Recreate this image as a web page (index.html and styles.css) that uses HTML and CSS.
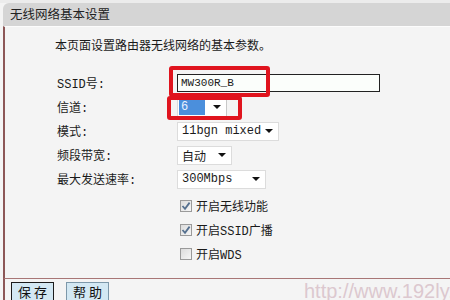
FILE: index.html
```html
<!DOCTYPE html>
<html>

<head>
    <meta charset="UTF-8">
    <title>无线网络基本设置</title>
    <link rel="stylesheet" href="styles.css">
</head>

<body>
    <div class="page">
        <div class="panel">
            <div class="panel-title">无线网络基本设置</div>
            <div class="panel-body">
                <p class="intro">本页面设置路由器无线网络的基本参数。</p>

                <div class="form">
                    <div class="row">
                        <span class="label">SSID号:</span>
                        <span class="field text-field">MW300R_B<span class="mark mark-ssid"></span></span>
                    </div>
                    <div class="row">
                        <span class="label">信道:</span>
                        <span class="field select select-channel">
                            <span class="value selected">6</span>
                            <span class="arrow"></span>
                            <span class="mark mark-channel"></span>
                        </span>
                    </div>
                    <div class="row">
                        <span class="label">模式:</span>
                        <span class="field select select-mode">
                            <span class="value">11bgn mixed</span>
                            <span class="arrow"></span>
                        </span>
                    </div>
                    <div class="row">
                        <span class="label">频段带宽:</span>
                        <span class="field select select-width">
                            <span class="value">自动</span>
                            <span class="arrow"></span>
                        </span>
                    </div>
                    <div class="row">
                        <span class="label">最大发送速率:</span>
                        <span class="field select select-rate">
                            <span class="value">300Mbps</span>
                            <span class="arrow"></span>
                        </span>
                    </div>
                </div>

                <div class="checks">
                    <div class="check-row">
                        <span class="checkbox checked">
                            <svg width="10" height="10" viewBox="0 0 10 10"><path d="M1.5 5 L4 7.8 L8.6 1.6" fill="none" stroke="#55708f" stroke-width="1.8"/></svg>
                        </span>
                        <span>开启无线功能</span>
                    </div>
                    <div class="check-row">
                        <span class="checkbox checked">
                            <svg width="10" height="10" viewBox="0 0 10 10"><path d="M1.5 5 L4 7.8 L8.6 1.6" fill="none" stroke="#55708f" stroke-width="1.8"/></svg>
                        </span>
                        <span>开启SSID广播</span>
                    </div>
                    <div class="check-row">
                        <span class="checkbox"></span>
                        <span>开启WDS</span>
                    </div>
                </div>
            </div>
        </div>

        <div class="footer">
            <button class="button button-active">保 存</button>
            <button class="button">帮 助</button>
        </div>

        <div class="watermark">http://www.192ly.com</div>
    </div>
</body>

</html>
```

FILE: styles.css
```css
body {
    margin: 0;
    padding: 0;
    background-color: #f4f4f4;
    font-family: "Liberation Mono", "Noto Sans CJK SC", monospace;
    font-size: 12px;
    color: #1a1a1a;
}

.page {
    position: relative;
    width: 450px;
    height: 300px;
    overflow: hidden;
    background: linear-gradient(#ececec, #ececec 3px, #f4f4f4 3px);
}

.panel {
    padding-top: 3px;
}

.panel-title {
    margin-left: 3px;
    height: 23px;
    line-height: 22px;
    padding-left: 7px;
    background-color: #d5d5d5;
    border-top-left-radius: 6px;
    font-family: "Noto Sans CJK SC", sans-serif;
    font-size: 12.5px;
    color: #222;
}

.panel-body {
    margin-left: 3px;
    height: 252px;
    border-left: 2px solid #8c5757;
    border-top: 1px solid #fcfcfc;
    padding: 9px 0 0 50px;
    box-sizing: border-box;
}

.intro {
    margin: 0;
    line-height: 18px;
    font-family: "Noto Sans CJK SC", sans-serif;
}

.form {
    margin: 17px 0 0 2px;
}

.row {
    display: flex;
    align-items: center;
    height: 24px;
}

.label {
    width: 120px;
    flex-shrink: 0;
}

.field {
    position: relative;
    display: flex;
    align-items: center;
    box-sizing: border-box;
    height: 19px;
    background-color: #fff;
}

.text-field {
    width: 203px;
    height: 18px;
    border: 1px solid #222;
    padding-left: 3px;
    font-size: 11px;
    background-color: #fbfefb;
}

.select {
    border: 1px solid #dcdcdc;
    padding-left: 4px;
    justify-content: space-between;
}

.select .arrow {
    width: 0;
    height: 0;
    margin-right: 5px;
    border-left: 4px solid transparent;
    border-right: 4px solid transparent;
    border-top: 4px solid #111;
}

.select-channel {
    width: 50px;
    padding-left: 1px;
    border-right-color: #c8c8c8;
}

.select-channel .arrow {
    margin-right: 5px;
}

.value.selected {
    display: block;
    width: 26px;
    height: 15px;
    line-height: 15px;
    padding-left: 2px;
    background-color: #4b8fdc;
    color: #e8f2ff;
    box-sizing: border-box;
}

.select-mode {
    width: 102px;
}

.select-width {
    width: 55px;
}

.select-width .value {
    font-family: "Noto Sans CJK SC", sans-serif;
}

.select-rate {
    width: 89px;
}

/* red annotation frames drawn over the fields */
.mark {
    position: absolute;
    border: 4px solid #e0141e;
    border-radius: 3px;
    box-sizing: border-box;
}

.mark-ssid {
    left: -9px;
    top: -9px;
    width: 101px;
    height: 31px;
}

.mark-channel {
    left: -11px;
    top: -3px;
    width: 75px;
    height: 24px;
}

.checks {
    margin: 3px 0 0 125px;
}

.check-row {
    display: flex;
    align-items: center;
    gap: 4px;
    height: 24px;
    font-family: "Noto Sans CJK SC", sans-serif;
}

.check-row span:last-child {
    font-family: "Liberation Mono", "Noto Sans CJK SC", monospace;
}

.checkbox {
    display: flex;
    align-items: center;
    justify-content: center;
    width: 12px;
    height: 12px;
    box-sizing: border-box;
    border: 1px solid #9a9a9a;
    background: linear-gradient(135deg, #dcdcdc, #f6f6f6);
}

.footer {
    display: flex;
    gap: 12px;
    height: 21px;
    margin-left: 3px;
    padding: 3px 0 0 6px;
    border-top: 1px solid #a87676;
    border-left: 2px solid #8c5757;
}

.button {
    width: 43px;
    height: 20px;
    padding: 0;
    border: 1px solid #7d98aa;
    background-color: #d3e8f3;
    font-family: "Noto Sans CJK SC", sans-serif;
    font-size: 13px;
    line-height: 16px;
    color: #111;
}

.button-active {
    border-color: #1c1c1c;
}

.watermark {
    position: absolute;
    left: 304px;
    top: 280px;
    font-family: "Liberation Sans", sans-serif;
    font-size: 20px;
    color: #dcc8cf;
    white-space: nowrap;
}
```
